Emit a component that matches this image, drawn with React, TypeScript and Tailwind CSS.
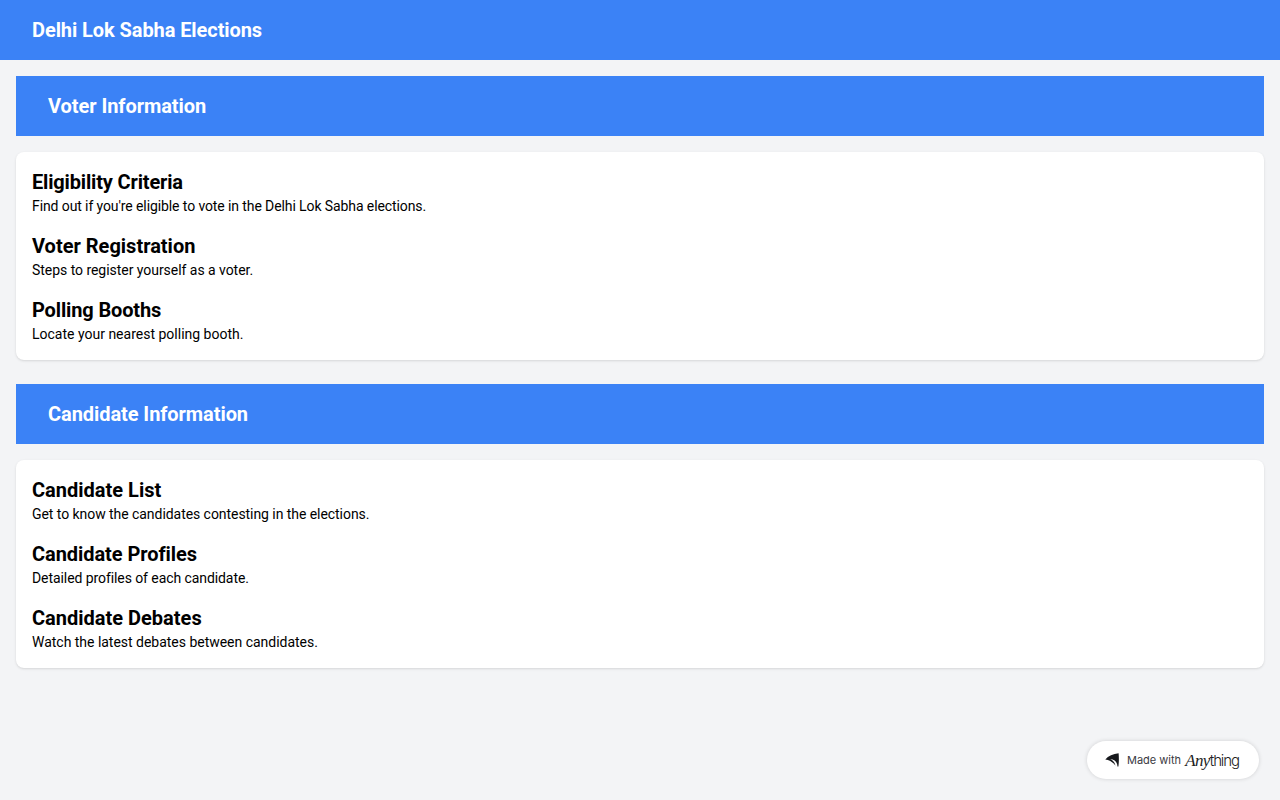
type Item = { h: string; hc: string; p: string; pc: string };

const voter: Item[] = [
  { h: "Eligibility Criteria", hc: "tracking-[-0.16px]", p: "Find out if you're eligible to vote in the Delhi Lok Sabha elections.", pc: "tracking-[-0.1px]" },
  { h: "Voter Registration", hc: "tracking-[0px]", p: "Steps to register yourself as a voter.", pc: "tracking-[-0.04px]" },
  { h: "Polling Booths", hc: "tracking-[-0.14px]", p: "Locate your nearest polling booth.", pc: "tracking-[0px]" },
];
const candidate: Item[] = [
  { h: "Candidate List", hc: "tracking-[0px]", p: "Get to know the candidates contesting in the elections.", pc: "tracking-[-0.055px]" },
  { h: "Candidate Profiles", hc: "tracking-[-0.06px]", p: "Detailed profiles of each candidate.", pc: "tracking-[-0.08px]" },
  { h: "Candidate Debates", hc: "tracking-[0px]", p: "Watch the latest debates between candidates.", pc: "tracking-[-0.02px]" },
];

function Section({ title, tc, items }: { title: string; tc: string; items: Item[] }) {
  return (
    <section className="mb-6">
      <div className="bg-[#3b82f6] h-[60px] px-8 flex items-center">
        <h2 className={`text-xl font-bold text-white ${tc}`}>{title}</h2>
      </div>
      <div className="mt-4 bg-white rounded-lg shadow-sm p-4 flex flex-col gap-4">
        {items.map((it) => (
          <div key={it.h}>
            <h3 className={`text-xl font-bold text-black leading-7 ${it.hc}`}>{it.h}</h3>
            <p className={`text-sm text-black leading-5 ${it.pc}`}>{it.p}</p>
          </div>
        ))}
      </div>
    </section>
  );
}

export default function App() {
  return (
    <div className="min-h-[800px] bg-[#f3f4f6] font-['Roboto',sans-serif] relative">
      <header className="bg-[#3b82f6] h-[60px] px-8 flex items-center">
        <h1 className="text-xl font-bold text-white tracking-[-0.08px]">Delhi Lok Sabha Elections</h1>
      </header>
      <main className="p-4">
        <Section title="Voter Information" tc="tracking-[-0.06px]" items={voter} />
        <Section title="Candidate Information" tc="tracking-[-0.07px]" items={candidate} />
      </main>
      <div className="absolute left-[1087px] top-[741px] w-[172px] h-[38px] rounded-full bg-white shadow-[0_0_4px_rgba(0,0,0,0.15)] flex items-center pl-[18px]">
        <svg width="15" height="14" viewBox="0 0 15 14" className="shrink-0">
          <path d="M0.3 6.4 C3.2 3 8.2 0.9 13.6 0.3 C14 4.5 14 9 13.4 13.6 L12.4 13.6 C12.6 9.8 9.8 6.2 5.2 6 C8.4 7.6 10 10 10.4 12.6 C8.4 9.4 4.6 6.8 0.3 6.4 Z" fill="#16181c" />
        </svg>
        <span className="ml-[7px] text-[11px] text-[#3a3a3f] font-['Inter',sans-serif]">Made with</span>
        <span className="ml-[4px] flex items-baseline text-[#222] leading-none">
          <span className="font-['Liberation_Serif',serif] italic text-[17px] tracking-[-0.6px]">Any</span>
          <span className="font-['Inter',sans-serif] font-light text-[15px] tracking-[-1.1px]">thing</span>
        </span>
      </div>
    </div>
  );
}
